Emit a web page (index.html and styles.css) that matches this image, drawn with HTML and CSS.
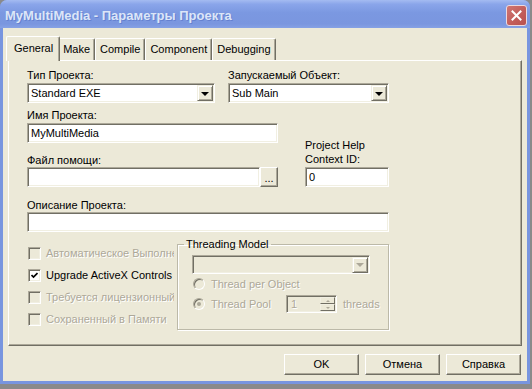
FILE: index.html
```html
<!DOCTYPE html>
<html lang="ru">
<head>
    <meta charset="UTF-8">
    <title>MyMultiMedia - Параметры Проекта</title>
    <link rel="stylesheet" href="styles.css">
</head>
<body>

<div class="window">
    <div class="titlebar">
        <span class="title">MyMultiMedia - Параметры Проекта</span>
        <span class="close-btn">
            <svg width="11" height="11" viewBox="0 0 11 11">
                <path d="M1.5 1.5 L9.5 9.5 M9.5 1.5 L1.5 9.5" stroke="#fff" stroke-width="2" stroke-linecap="square"/>
            </svg>
        </span>
    </div>

    <div class="client">
        <div class="tabs">
            <div class="tab active">General</div>
            <div class="tab">Make</div>
            <div class="tab">Compile</div>
            <div class="tab">Component</div>
            <div class="tab">Debugging</div>
        </div>

        <div class="panel">
            <div class="row-type">
                <div class="field type-field">
                    <label>Тип Проекта:</label>
                    <div class="combo">
                        <span class="combo-text">Standard EXE</span>
                        <span class="combo-btn"><span class="arrow"></span></span>
                    </div>
                </div>
                <div class="field start-field">
                    <label>Запускаемый Объект:</label>
                    <div class="combo">
                        <span class="combo-text">Sub Main</span>
                        <span class="combo-btn"><span class="arrow"></span></span>
                    </div>
                </div>
            </div>

            <div class="row-name">
                <div class="col-left">
                    <label class="name-label">Имя Проекта:</label>
                    <div class="edit">MyMultiMedia</div>
                    <label class="help-label">Файл помощи:</label>
                    <div class="edit-with-btn">
                        <div class="edit"></div>
                        <div class="dots-btn">...</div>
                    </div>
                </div>
                <div class="col-right">
                    <label class="ctx-label">Project Help<br>Context ID:</label>
                    <div class="edit">0</div>
                </div>
            </div>

            <label class="desc-label">Описание Проекта:</label>
            <div class="edit desc"></div>

            <div class="row-bottom">
                <div class="checks">
                    <div class="check disabled"><span class="box"></span><span class="check-text">Автоматическое Выполнение</span></div>
                    <div class="check checked">
                        <span class="box">
                            <svg width="7" height="7" viewBox="0 0 7 7"><path d="M0.5 3 L2.5 5 L6.5 1" stroke="#000" stroke-width="1.7" fill="none"/></svg>
                        </span>
                        <span class="check-text">Upgrade ActiveX Controls</span>
                    </div>
                    <div class="check disabled"><span class="box"></span><span class="check-text">Требуется лицензионный ключ</span></div>
                    <div class="check disabled"><span class="box"></span><span class="check-text">Сохраненный в Памяти</span></div>
                </div>

                <fieldset class="group">
                    <legend>Threading Model</legend>
                    <div class="combo disabled">
                        <span class="combo-text"></span>
                        <span class="combo-btn"><span class="arrow"></span></span>
                    </div>
                    <div class="radio-row">
                        <span class="radio"></span>
                        <span class="radio-text">Thread per Object</span>
                    </div>
                    <div class="radio-row">
                        <span class="radio selected"></span>
                        <span class="radio-text pool">Thread Pool</span>
                        <div class="spin">
                            <span class="spin-text">1</span>
                            <span class="spin-btns">
                                <span class="spin-btn"><span class="up"></span></span>
                                <span class="spin-btn"><span class="down"></span></span>
                            </span>
                        </div>
                        <span class="radio-text threads">threads</span>
                    </div>
                </fieldset>
            </div>
        </div>

        <div class="buttons">
            <div class="btn">OK</div>
            <div class="btn">Отмена</div>
            <div class="btn">Справка</div>
        </div>
    </div>
</div>

</body>
</html>
```

FILE: styles.css
```css
body {
    margin: 0;
    background: #8a8a8a;
    font-family: "Liberation Sans", Arial, sans-serif;
    font-size: 11px;
    color: #000;
}

.window {
    width: 530px;
    height: 384px;
    background: #7895df;
    border-radius: 7px 7px 0 0;
    display: flex;
    flex-direction: column;
}

.titlebar {
    height: 28px;
    box-sizing: border-box;
    padding: 2px 3px 0 5px;
    display: flex;
    align-items: center;
    justify-content: space-between;
    background: linear-gradient(#a4bbf1, #8aa5ea 15%, #7b98e1 45%, #7a96df 85%, #86a1e5);
    border-radius: 7px 7px 0 0;
}
.title {
    color: #dce6f8;
    font-weight: bold;
    font-size: 13px;
    text-shadow: 1px 1px #6581d0;
}
.close-btn {
    width: 21px;
    height: 21px;
    box-sizing: border-box;
    border: 1px solid #ecd9de;
    border-radius: 3px;
    background: linear-gradient(135deg, #cf7673, #c25c59 60%, #b9514f);
    display: flex;
    align-items: center;
    justify-content: center;
}

.client {
    flex: 1;
    margin: 0 3px 3px;
    background: #ece9d8;
    padding: 8px 5px 0 5px;
}

/* tab strip */
.tabs {
    display: flex;
    align-items: flex-end;
    height: 24px;
    position: relative;
    z-index: 1;
}
.tab {
    height: 22px;
    box-sizing: border-box;
    padding: 0 4px;
    line-height: 21px;
    border-top: 1px solid #fff;
    border-left: 1px solid #fff;
    border-right: 1px solid #716f64;
    box-shadow: inset -1px 0 #aca899;
    border-radius: 2px 2px 0 0;
    background: #ece9d8;
}
.tab.active {
    height: 25px;
    line-height: 22px;
    margin: 0 -2px -1px -2px;
    padding: 0 6px 0 7px;
    position: relative;
    z-index: 2;
}

.panel {
    height: 286px;
    box-sizing: border-box;
    border: 1px solid;
    border-color: #fff #716f64 #716f64 #fff;
    box-shadow: inset -1px -1px #aca899;
    padding: 8px 0 0 18px;
    display: flex;
    flex-direction: column;
    align-items: flex-start;
}

label {
    display: block;
    line-height: 13px;
}

/* sunken edit and combo boxes */
.edit, .combo, .spin {
    height: 20px;
    box-sizing: border-box;
    border: 1px solid;
    border-color: #aca899 #fff #fff #aca899;
    box-shadow: inset 1px 1px #716f64, inset -1px -1px #f1efe2;
    background: #fff;
}
.edit {
    padding: 0 3px;
    line-height: 18px;
}

.combo {
    margin-top: 1px;
    display: flex;
    align-items: center;
    padding: 1px 1px 1px 3px;
}
.combo-text {
    flex: 1;
}
.combo-btn {
    width: 16px;
    height: 16px;
    box-sizing: border-box;
    border: 1px solid;
    border-color: #f1efe2 #716f64 #716f64 #f1efe2;
    box-shadow: inset 1px 1px #fff, inset -1px -1px #aca899;
    background: #ece9d8;
    display: flex;
    align-items: center;
    justify-content: center;
}
.arrow {
    width: 0;
    height: 0;
    border-left: 4px solid transparent;
    border-right: 4px solid transparent;
    border-top: 4px solid #000;
    margin-top: 1px;
}

.row-type {
    display: flex;
    gap: 13px;
}
.type-field {
    width: 188px;
}
.start-field {
    width: 161px;
}

.row-name {
    display: flex;
    margin-top: 6px;
}
.col-left {
    width: 251px;
}
.col-left .edit {
    margin-top: 1px;
}
.help-label {
    margin-top: 11px;
}
.edit-with-btn {
    display: flex;
}
.edit-with-btn .edit {
    flex: 1;
    margin-top: 0;
}
.dots-btn {
    width: 18px;
    height: 20px;
    box-sizing: border-box;
    border: 1px solid;
    border-color: #fff #716f64 #716f64 #fff;
    box-shadow: inset -1px -1px #aca899;
    background: #ece9d8;
    text-align: center;
    line-height: 20px;
}
.col-right {
    width: 84px;
    margin-left: 27px;
    display: flex;
    flex-direction: column;
    justify-content: flex-end;
}
.ctx-label {
    line-height: 14px;
    margin-bottom: 1px;
}

.desc-label {
    margin-top: 12px;
}
.desc {
    width: 362px;
}

/* check boxes and threading group */
.row-bottom {
    display: flex;
}
.checks {
    width: 147px;
    padding-top: 10px;
    overflow: hidden;
}
.check {
    height: 22px;
    display: flex;
    align-items: center;
    white-space: nowrap;
}
.box {
    flex: none;
    width: 13px;
    height: 13px;
    box-sizing: border-box;
    border: 1px solid;
    border-color: #aca899 #fff #fff #aca899;
    box-shadow: inset 1px 1px #716f64, inset -1px -1px #f1efe2;
    background: #fff;
    margin: 0 5px 0 1px;
    display: flex;
    align-items: center;
    justify-content: center;
}
.check.disabled .box {
    background: #ece9d8;
}
.check.disabled .check-text {
    color: #aca899;
    text-shadow: 1px 1px #fff;
}

.group {
    margin: 6px 0 0 3px;
    padding: 4px 0 10px 14px;
    width: 212px;
    box-sizing: border-box;
    border: 1px solid #bcb9a8;
    box-shadow: inset 1px 1px #fff, 1px 1px #fff;
    min-width: 0;
}
.group legend {
    padding: 0 2px;
    margin-left: -8px;
    line-height: 13px;
}
.group .combo {
    width: 178px;
    margin-top: 0;
    height: 19px;
}
.combo.disabled {
    background: #ece9d8;
}
.combo.disabled .arrow {
    border-top-color: #aca899;
}

.radio-row {
    height: 20px;
    display: flex;
    align-items: center;
}
.radio-row:first-of-type {
    margin-top: 1px;
}
.radio {
    flex: none;
    width: 12px;
    height: 12px;
    box-sizing: border-box;
    border-radius: 50%;
    border: 1px solid;
    border-color: #aca899 #fff #fff #aca899;
    box-shadow: inset 1px 1px #716f64;
    background: #ece9d8;
    margin: 0 6px 0 1px;
    display: flex;
    align-items: center;
    justify-content: center;
}
.radio.selected::after {
    content: "";
    width: 4px;
    height: 4px;
    border-radius: 50%;
    background: #aca899;
}
.radio-text {
    color: #aca899;
    text-shadow: 1px 1px #fff;
    white-space: nowrap;
}
.pool {
    width: 75px;
}
.threads {
    margin-left: 6px;
}

.spin {
    width: 51px;
    height: 18px;
    background: #ece9d8;
    display: flex;
    padding: 1px;
}
.spin-text {
    flex: 1;
    padding-left: 3px;
    line-height: 15px;
    color: #aca899;
    text-shadow: 1px 1px #fff;
}
.spin-btns {
    width: 15px;
    display: flex;
    flex-direction: column;
}
.spin-btn {
    flex: 1;
    box-sizing: border-box;
    border: 1px solid;
    border-color: #f1efe2 #716f64 #716f64 #f1efe2;
    background: #ece9d8;
    display: flex;
    align-items: center;
    justify-content: center;
}
.up, .down {
    width: 0;
    height: 0;
    border-left: 2px solid transparent;
    border-right: 2px solid transparent;
}
.up {
    border-bottom: 2px solid #aca899;
}
.down {
    border-top: 2px solid #aca899;
}

/* dialog buttons */
.buttons {
    display: flex;
    justify-content: flex-end;
    gap: 6px;
    margin-top: 8px;
    padding-right: 1px;
}
.btn {
    width: 75px;
    height: 21px;
    box-sizing: border-box;
    border: 1px solid;
    border-color: #fff #716f64 #716f64 #fff;
    box-shadow: inset -1px -1px #aca899;
    background: #ece9d8;
    text-align: center;
    line-height: 19px;
}
```
